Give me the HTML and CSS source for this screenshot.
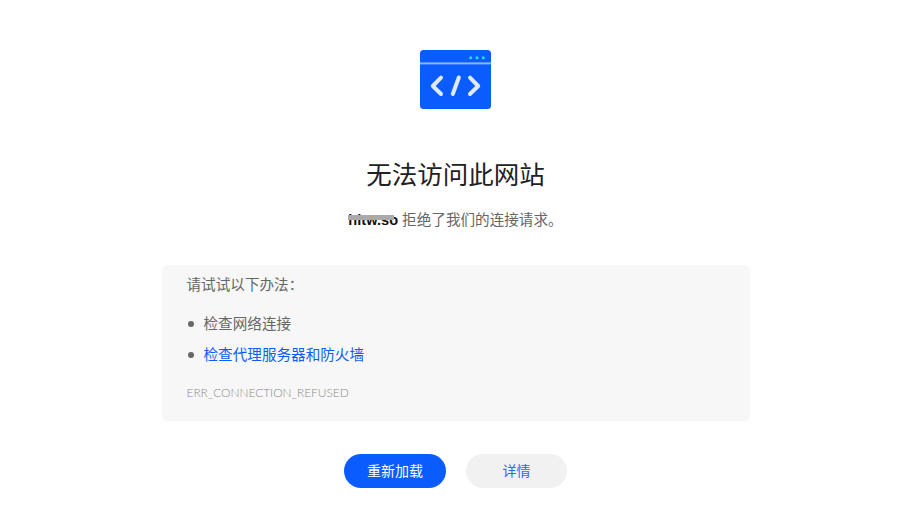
FILE: index.html
```html
<!DOCTYPE html>
<html lang="zh-CN">
<head>
<meta charset="utf-8">
<title>无法访问此网站</title>
<link rel="stylesheet" href="styles.css">
</head>
<body>
<main class="page">
  <svg class="logo" width="71" height="59" viewBox="0 0 71 59" aria-hidden="true">
    <rect width="71" height="59" rx="3.5" fill="#0b5cff"/>
    <rect y="12.4" width="71" height="2" fill="#8fb3ff"/>
    <circle cx="50.7" cy="7.7" r="1.5" fill="#1de9d0"/>
    <circle cx="57" cy="7.7" r="1.5" fill="#1de9d0"/>
    <circle cx="63.3" cy="7.7" r="1.5" fill="#1de9d0"/>
    <g fill="none" stroke="#dfe9ff" stroke-width="4" stroke-linecap="round" stroke-linejoin="round">
      <path d="M21 27.7 12.8 36 21 44"/>
      <path d="M38.8 27.5 32.8 44"/>
      <path d="M50 27.7 58.2 36 50 44"/>
    </g>
  </svg>
  <h1 class="title">无法访问此网站</h1>
  <p class="sub"><span class="host">hltw.so<span class="mask"></span></span> 拒绝了我们的连接请求。</p>
  <section class="panel">
    <p class="try">请试试以下办法：</p>
    <ul class="list">
      <li class="item">检查网络连接</li>
      <li class="item"><a class="link" href="#">检查代理服务器和防火墙</a></li>
    </ul>
    <p class="code">ERR_CONNECTION_REFUSED</p>
  </section>
  <div class="actions">
    <button class="btn primary" type="button">重新加载</button>
    <button class="btn ghost" type="button">详情</button>
  </div>
</main>
</body>
</html>
```
FILE: styles.css
```css
* { box-sizing: border-box; }
html, body { margin: 0; padding: 0; background: #fff; }
body { font-family: "Liberation Sans", "Noto Sans CJK SC", sans-serif; color: #666; height: 516px; overflow: hidden; }
.page { display: flex; flex-direction: column; align-items: center; padding: 50px 0 0 8px; }
.logo { display: block; }
.title { margin: 49px 0 0; font-size: 25.5px; line-height: 34px; font-weight: 400; color: #202124; }
.sub { margin: 18px 0 0; font-size: 14.6px; line-height: 20px; color: #666; }
.host { position: relative; font-weight: 700; color: #111; }
.mask { position: absolute; left: 0; right: 4px; top: 3px; height: 5px; background: #aaa; filter: blur(0.6px); }
.panel { width: 588px; height: 156px; margin: 35px 0 0; padding: 10px 25px 0; background: #f7f7f7; border-radius: 6px; font-size: 14.6px; }
.try { margin: 0; line-height: 20px; }
.list { margin: 19px 0 0; padding: 0 0 0 1px; list-style: none; line-height: 20px; }
.item { display: flex; align-items: center; gap: 10px; margin-bottom: 11px; }
.item::before { content: ""; width: 6px; height: 6px; border-radius: 50%; background: #666; flex: none; }
.link { color: #0b5cff; text-decoration: none; }
.code { margin: 20px 0 0; font-family: "Lato", "Liberation Sans", sans-serif; font-size: 11.9px; font-weight: 300; line-height: 16px; color: #8a8a8a; }
.actions { display: flex; gap: 20px; margin-top: 33px; }
.btn { height: 34px; border: 0; border-radius: 17px; font: inherit; font-size: 14px; padding: 0 0 2px; }
.primary { width: 102px; background: #0b5cff; color: #fff; }
.ghost { width: 101px; background: #f1f1f1; color: #2d68ff; }
```
